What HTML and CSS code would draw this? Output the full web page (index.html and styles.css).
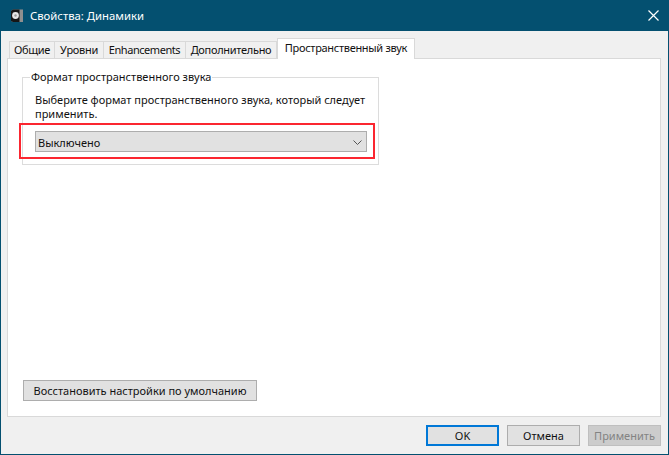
FILE: index.html
```html
<!DOCTYPE html>
<html lang="ru">
<head>
<meta charset="utf-8">
<title>Свойства: Динамики</title>
<link rel="stylesheet" href="styles.css">
</head>
<body>
<div class="window">
  <header class="titlebar">
    <svg class="app-icon" width="16" height="16" viewBox="0 0 16 16">
      <path d="M1 3 L3 1.5 H13 V14 H3 L1 13 Z" fill="#8f8f8f"/>
      <path d="M1 3 L3 1.5 H9.5 V14 H3 L1 13 Z" fill="#161616"/>
      <circle cx="5.5" cy="7.5" r="3.4" fill="#e6e6e6"/>
      <circle cx="5.5" cy="7.5" r="1.2" fill="#9a9a9a"/>
    </svg>
    <span class="title">Свойства: Динамики</span>
    <svg class="close" width="11" height="11" viewBox="0 0 11 11">
      <path d="M0.5 0.5 L10.5 10.5 M10.5 0.5 L0.5 10.5" stroke="#fff" stroke-width="1.2" fill="none"/>
    </svg>
  </header>
  <main class="content">
    <nav class="tabs">
      <span class="tab tab-1">Общие</span>
      <span class="tab tab-2">Уровни</span>
      <span class="tab tab-3">Enhancements</span>
      <span class="tab tab-4">Дополнительно</span>
      <span class="tab tab-active">Пространственный звук</span>
    </nav>
    <section class="panel">
      <fieldset class="group">
        <legend class="legend">Формат пространственного звука</legend>
        <p class="hint">Выберите формат пространственного звука, который следует применить.</p>
        <div class="combo">
          <span>Выключено</span>
          <svg width="9" height="5" viewBox="0 0 9 5"><path d="M0.5 0.5 L4.5 4.5 L8.5 0.5" stroke="#555" stroke-width="1" fill="none"/></svg>
          <div class="highlight"></div>
        </div>
      </fieldset>
      <button class="btn reset" type="button">Восстановить настройки по умолчанию</button>
    </section>
    <footer class="actions">
      <button class="btn action default" type="button">OK</button>
      <button class="btn action" type="button">Отмена</button>
      <button class="btn action disabled" type="button">Применить</button>
    </footer>
  </main>
</div>
</body>
</html>
```
FILE: styles.css
```css
* { box-sizing: border-box; }
html, body { margin: 0; height: 100%; }
body {
  width: 669px;
  height: 455px;
  overflow: hidden;
  font-family: "Noto Sans", "Open Sans", sans-serif;
  font-size: 11px;
  color: #111;
}
.window {
  width: 669px;
  height: 455px;
  display: flex;
  flex-direction: column;
  background: #045070;
  padding: 0 1px 1px;
}
.titlebar {
  height: 31px;
  flex: none;
  display: flex;
  align-items: center;
  padding: 0 0 0 9px;
  color: #fff;
}
.app-icon { margin-right: 4px; }
.title { flex: 1; font-size: 11.3px; }
.close { margin-right: 9px; }
.content {
  flex: 1;
  background: #f0f0f0;
  padding: 7px 7px 0 6px;
  display: flex;
  flex-direction: column;
  min-height: 0;
}
.tabs {
  height: 21px;
  flex: none;
  display: flex;
  align-items: flex-end;
  padding-left: 2px;
  position: relative;
  z-index: 1;
  margin-bottom: -1px;
}
.tab {
  height: 18px;
  display: flex;
  align-items: center;
  justify-content: center;
  background: #f0f0f0;
  border: 1px solid #d9d9d9;
  border-left-width: 0;
  white-space: nowrap;
  line-height: 16px;
  letter-spacing: -0.3px;
}
.tab-1 { width: 46px; border-left-width: 1px; }
.tab-2 { width: 49px; }
.tab-3 { width: 82px; letter-spacing: -0.45px; }
.tab-4 { width: 91px; }
.tab-active {
  width: 138px;
  height: 21px;
  padding-bottom: 2px;
  background: #fff;
  border-width: 1px 1px 0 1px;
}
.panel {
  flex: 1;
  min-height: 0;
  background: #fff;
  border: 1px solid #d9d9d9;
  padding: 10px 14px 15px 14px;
  display: flex;
  flex-direction: column;
  justify-content: space-between;
  align-items: flex-start;
}
.group {
  width: 357px;
  height: 96px;
  margin: 0;
  border: 1px solid #dcdcdc;
  padding: 0 10px 0 12px;
  min-width: 0;
}
.legend {
  padding: 0 1px;
  margin-left: -5px;
  line-height: 16px;
}
.hint {
  margin: 8px 0 0;
  line-height: 14px;
  width: 340px;
}
.combo {
  position: relative;
  width: 332px;
  height: 21px;
  margin-top: 10px;
  background: #e1e1e1;
  border: 1px solid #adadad;
  display: flex;
  align-items: center;
  justify-content: space-between;
  padding: 1px 4px 0 2px;
}
.highlight {
  position: absolute;
  left: -17px;
  top: -9px;
  width: 356px;
  height: 36px;
  border: 2px solid #fb2630;
  pointer-events: none;
}
.btn {
  font: inherit;
  color: #111;
  background: #e1e1e1;
  border: 1px solid #adadad;
  padding: 0;
  margin: 0;
  height: 21px;
  line-height: 17px;
}
.reset { width: 234px; margin-left: 1px; }
.actions {
  height: 37px;
  flex: none;
  display: flex;
  justify-content: flex-end;
  gap: 8px;
  padding-top: 8px;
}
.action { width: 73px; }
.default { border: 2px solid #0078d7; }
.disabled { background: #cccccc; border-color: #bfbfbf; color: #838383; }
```
